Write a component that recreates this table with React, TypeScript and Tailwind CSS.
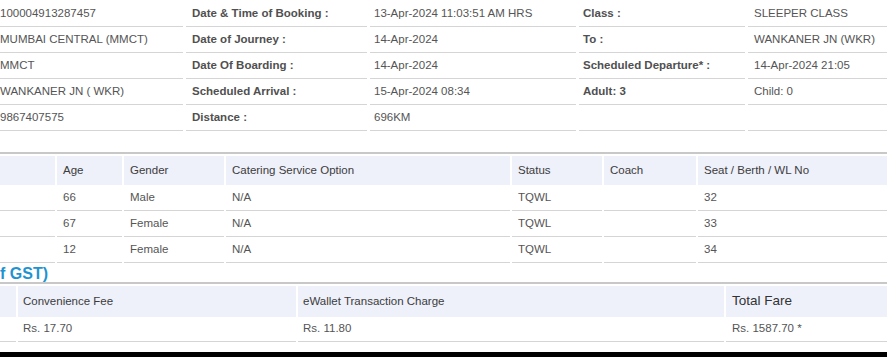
const font = { fontFamily: '"Liberation Sans", Arial, sans-serif' };

const summary = [
  ["100004913287457", "Date & Time of Booking :", "13-Apr-2024 11:03:51 AM HRS", "Class :", "SLEEPER CLASS"],
  ["MUMBAI CENTRAL (MMCT)", "Date of Journey :", "14-Apr-2024", "To :", "WANKANER JN (WKR)"],
  ["MMCT", "Date Of Boarding :", "14-Apr-2024", "Scheduled Departure* :", "14-Apr-2024 21:05"],
  ["WANKANER JN ( WKR)", "Scheduled Arrival :", "15-Apr-2024 08:34", "Adult:  3", "Child:  0"],
  ["9867407575", "Distance :", "696KM", "", ""],
];

const passengers = [
  ["66", "Male", "N/A", "TQWL", "", "32"],
  ["67", "Female", "N/A", "TQWL", "", "33"],
  ["12", "Female", "N/A", "TQWL", "", "34"],
];

const paxCols = "grid grid-cols-[55px_65px_100px_284px_90px_92px_1fr] gap-x-[2px]";
const feeCols = "grid grid-cols-[16px_278px_426px_1fr] gap-x-[2px]";

export default function App() {
  return (
    <div className="w-[887px] h-[357px] overflow-hidden bg-white text-[11.5px]" style={font}>
      {/* booking summary */}
      <div className="pt-[1px]">
        {summary.map((row, i) => (
          <div key={i} className="grid grid-cols-[183px_181px_206px_166px_1fr] gap-x-[3px] h-[26px]">
            <div className="border-b border-[#d5d5d5] flex items-center text-[#555] whitespace-nowrap">{row[0]}</div>
            <div className="border-b border-[#d5d5d5] flex items-center px-[6px] font-bold text-[#505050]">{row[1]}</div>
            <div className="border-b border-[#d5d5d5] flex items-center px-[4px] text-[#555]">{row[2]}</div>
            <div className="border-b border-[#d5d5d5] flex items-center px-[4px] font-bold text-[#505050]">{row[3]}</div>
            <div className="border-b border-[#d5d5d5] flex items-center px-[6px] text-[#555]">{row[4]}</div>
          </div>
        ))}
      </div>

      {/* passenger details */}
      <div className="mt-[21px] border-t-2 border-[#c8c8c8] pt-[2px]">
        <div className={`${paxCols} h-[29px] text-[#3c3c3c]`}>
          <div className="bg-[#eef0fa]" />
          <div className="bg-[#eef0fa] flex items-center px-[6px]">Age</div>
          <div className="bg-[#eef0fa] flex items-center px-[6px]">Gender</div>
          <div className="bg-[#eef0fa] flex items-center px-[6px]">Catering Service Option</div>
          <div className="bg-[#eef0fa] flex items-center px-[6px]">Status</div>
          <div className="bg-[#eef0fa] flex items-center px-[6px]">Coach</div>
          <div className="bg-[#eef0fa] flex items-center px-[6px]">Seat / Berth / WL No</div>
        </div>
        {passengers.map((p, i) => (
          <div key={i} className={`${paxCols} h-[26px] text-[#555]`}>
            <div className="border-b border-[#d5d5d5]" />
            {p.map((v, j) => (
              <div key={j} className="border-b border-[#d5d5d5] flex items-center px-[6px]">{v}</div>
            ))}
          </div>
        ))}
      </div>

      {/* fare details */}
      <div className="h-[19px] flex items-end text-[16px] font-bold text-[#1f93d0] leading-none">f GST)</div>
      <div className="border-t-2 border-[#c8c8c8] pt-[2px]">
        <div className={`${feeCols} h-[31px] text-[#3c3c3c]`}>
          <div className="bg-[#eef0fa]" />
          <div className="bg-[#eef0fa] flex items-center px-[5px]">Convenience Fee</div>
          <div className="bg-[#eef0fa] flex items-center px-[5px]">eWallet Transaction Charge</div>
          <div className="bg-[#eef0fa] flex items-center px-[6px] text-[13.5px] text-[#333]">Total Fare</div>
        </div>
        <div className={`${feeCols} h-[25px] text-[#555]`}>
          <div className="border-b border-[#d5d5d5]" />
          <div className="border-b border-[#d5d5d5] flex items-center px-[5px]">Rs. 17.70</div>
          <div className="border-b border-[#d5d5d5] flex items-center px-[5px]">Rs. 11.80</div>
          <div className="border-b border-[#d5d5d5] flex items-center px-[6px]">Rs. 1587.70 *</div>
        </div>
      </div>
      <div className="mt-[10px] h-[5px] bg-black" />
    </div>
  );
}
